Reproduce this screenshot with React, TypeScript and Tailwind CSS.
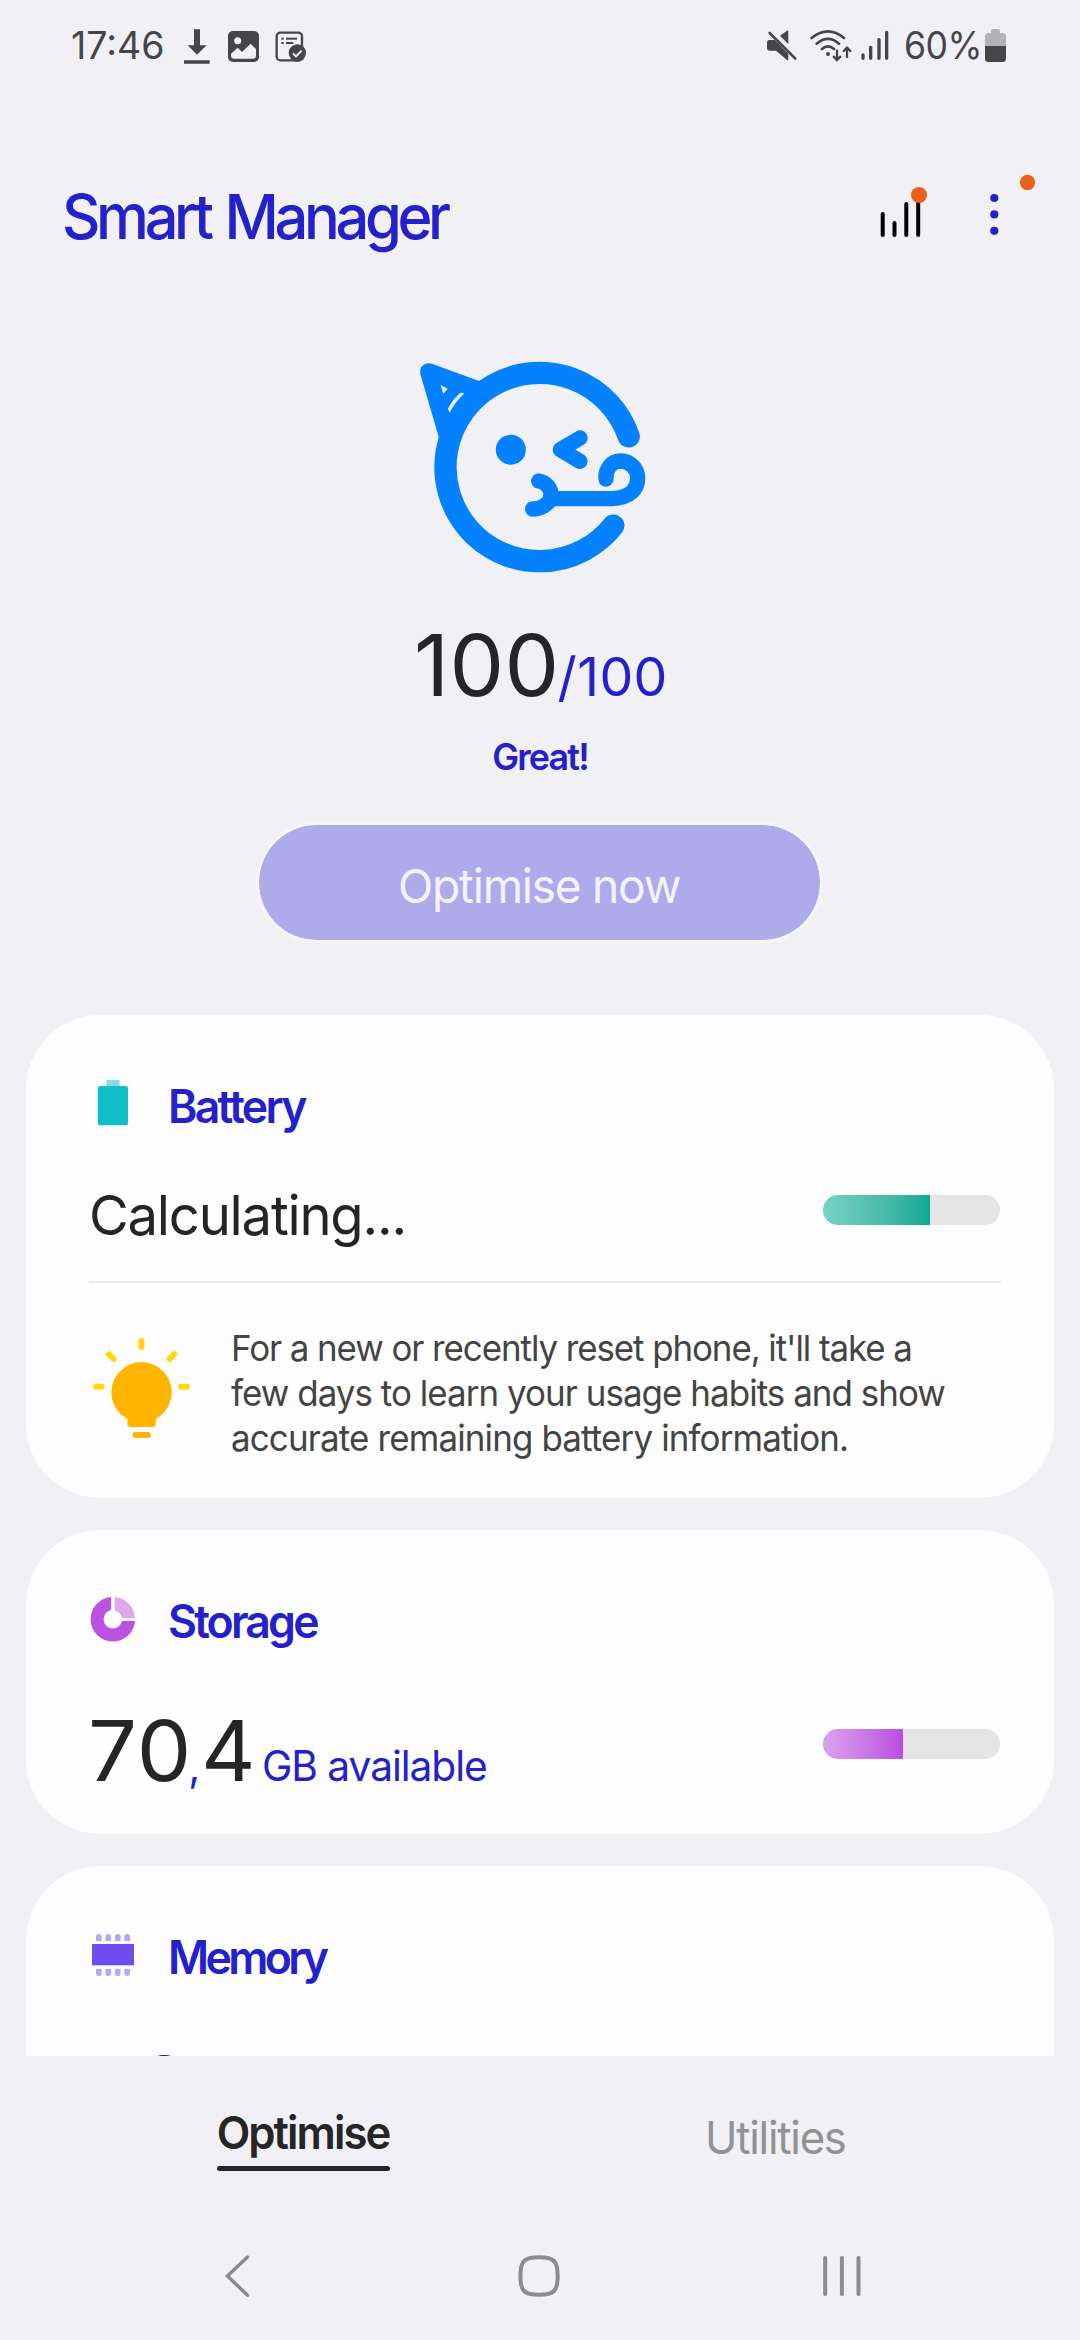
import type { ReactNode } from "react";

const INK = "#464648";

function StatusBar() {
  return (
    <div className="flex h-[91px] items-center text-[37.5px] leading-none text-[#464648]">
      <span className="ml-[71px] w-[99px]">17:46</span>
      <svg className="ml-[10px] h-[40px] w-[146px]" viewBox="390 45 438 120">
        <g fill={INK}>
          <path d="M432 55h18v48h20l-29 28-28-28h19zM402 148h77v10h-77z" />
          <rect x="534" y="60" width="93" height="93" rx="15" />
          <rect x="694" y="80" width="7" height="6" />
          <rect x="694" y="93" width="7" height="6" />
          <rect x="708" y="80" width="33" height="6" />
          <rect x="708" y="93" width="22" height="6" />
        </g>
        <circle cx="563" cy="89" r="10.500" fill="#f0f0f5" />
        <path d="M543 128l20-18 13 13 26-25 16 16v20q0 9-9 9h-57q-9 0-9-9z" fill="#f0f0f5" />
        <rect x="680" y="65" width="76" height="83" rx="11" fill="none" stroke={INK} strokeWidth="7" />
        <circle cx="742" cy="126" r="26" fill={INK} />
        <path d="M729 127l9 9 17-17" fill="none" stroke="#f0f0f5" strokeWidth="6" />
      </svg>
      <svg className="ml-[439px] h-[40px] w-[130px]" viewBox="75 45 390 120">
        <g fill={INK}>
          <path d="M145 61v40l-26-26 22-16q4-2 4 2z" />
          <path d="M81 95q0-8 8-8h15l41 42v16q0 4-4 2l-33-28H89q-8 0-8-8z" />
          <circle cx="264" cy="129" r="6" />
        </g>
        <path d="M97 57l78 76" stroke="#f0f0f5" strokeWidth="7" />
        <g fill="none" stroke={INK} strokeLinecap="round">
          <path d="M89 66l77 77" strokeWidth="8" />
          <path d="M215 81Q264 41 312 81M230 98Q264 69 297 98M246 114Q264 98 282 114" strokeWidth="8" />
          <path d="M291 119v26M281 137l10 10 10-10M321 138v-27M311 120l10-10 10 10" strokeWidth="7" />
          <path d="M369 132v10M392 109v33M417 86v56M440 64v78" strokeWidth="10" />
        </g>
      </svg>
      <span className="ml-[9px] w-[76px] origin-left scale-x-95 tracking-[-0.5px]">60%</span>
      <svg className="ml-[5px] h-[34px] w-[21px]" viewBox="0 0 21 34">
        <path d="M6 2q0-2 2-2h5q2 0 2 2v2h3q3 0 3 3v10H0V7q0-3 3-3h3z" fill="#b3b3b5" />
        <path d="M0 17h21v12q0 4-3 4H3q-3 0-3-4z" fill={INK} />
      </svg>
    </div>
  );
}

function Header() {
  return (
    <header className="flex h-[249px] items-center pt-[3px]">
      <h1 className="mt-[2px] ml-[62px] w-[461px] origin-left scale-x-[.97] text-[61.4px] font-medium leading-none tracking-[-4.5px] whitespace-nowrap [word-spacing:3.5px] text-[#2420cc]">
        Smart Manager
      </h1>
      <svg className="ml-[347px] h-[80px] w-[60px]" viewBox="870 177 60 80">
        <path d="M882.700 214v21M894.500 223v12M906.300 204v31M918.200 200v35" stroke="#000" strokeWidth="4" strokeLinecap="round" />
        <circle cx="919" cy="195" r="8" fill="#ed601a" />
      </svg>
      <svg className="ml-[50px] h-[80px] w-[60px] overflow-visible" viewBox="980 177 60 80">
        <g fill="#2420cc">
          <circle cx="994.300" cy="198" r="4.100" />
          <circle cx="994.300" cy="214.400" r="4.100" />
          <circle cx="994.300" cy="230.800" r="4.100" />
        </g>
        <circle cx="1027.500" cy="182.500" r="7.700" fill="#ed601a" />
      </svg>
    </header>
  );
}

function PartyFace() {
  return (
    <svg className="ml-[400px] h-[250px] w-[270px]" viewBox="0 0 810 750">
      <path d="M61 102Q57 76 82 70Q90 69 98 72L237 123L220 181L160 270L116 290Z" fill="#0381fe" />
      <g fill="none" stroke="#0381fe" strokeLinecap="round" strokeLinejoin="round">
        <path d="M686 289A282.500 282.500 0 1 0 640 557" strokeWidth="67" />
        <path d="M540 294L481 329L540 364" strokeWidth="46" />
        <path d="M416 423C440 426 453 447 453 464C453 486 430 507 398 507" strokeWidth="46" />
        <path d="M456 476H635C690 474 713 448 713 414C713 386 690 363 662 363C636 363 615 386 618 417" strokeWidth="46" />
      </g>
      <circle cx="332.500" cy="329" r="45" fill="#0381fe" />
      <path d="M122 136L143 146L130 161ZM144 207Q146 218 150 216Q165 186 192 161Q187 156 180 160Q155 182 144 207Z" fill="#f0f0f5" />
    </svg>
  );
}

function Summary() {
  return (
    <section className="flex flex-col">
      <PartyFace />
      <div className="mt-[33px] ml-[414px] flex h-[85px] items-baseline text-[85px] leading-[85px] text-[#252525]">
        <span className="origin-left scale-x-[1.02] tracking-[0.25px]">100</span>
        <span className="ml-[1px] text-[53.6px] tracking-[0.36px] text-[#2420cc]">/100</span>
      </div>
      <p className="mt-[29px] origin-center scale-x-[.97] text-center text-[37px] font-semibold leading-[40px] tracking-[-1.9px] text-[#2420cc]">
        Great!
      </p>
      <button className="mt-[45px] ml-[256px] flex h-[121px] w-[567px] items-center justify-center rounded-full border-3 border-[#f5f5fa] bg-[#adabea] bg-clip-padding pt-[6px] text-[47px] leading-none text-[#f4f2fb]">
        <span className="scale-x-98 tracking-[-1.25px]">Optimise now</span>
      </button>
    </section>
  );
}

type CardProps = { icon: ReactNode; title: string; titleClass: string; className: string; children: ReactNode };

function Card({ icon, title, titleClass, className, children }: CardProps) {
  return (
    <section className={`mx-[26px] overflow-hidden bg-[#fdfdfd] pt-[61px] pr-[53px] pl-[63px] ${className}`}>
      <div className="flex h-[60px] items-center">
        {icon}
        <h2 className={`ml-[31px] origin-left scale-x-[.97] text-[46px] font-semibold leading-none text-[#2420cc] ${titleClass}`}>{title}</h2>
      </div>
      {children}
    </section>
  );
}

function Meter({ fill, className }: { fill: string; className: string }) {
  return (
    <div className={`w-[177px] overflow-hidden rounded-full bg-[#e4e4e4] ${className}`}>
      <div className={`h-full bg-linear-to-r ${fill}`} />
    </div>
  );
}

function BatteryCard() {
  return (
    <Card
      title="Battery"
      titleClass="tracking-[-2.8px]"
      className="mt-[72px] h-[483px] rounded-[74px]"
      icon={
        <svg className="h-[60px] w-[48px]" viewBox="89 1076 48 60">
          <rect x="106.400" y="1080" width="13.200" height="7" fill="#88dbe0" />
          <rect x="97.800" y="1086" width="30.300" height="39.300" rx="2.500" fill="#11bec6" />
        </svg>
      }
    >
      <div className="flex h-[145px] items-start justify-between">
        <span className="mt-[49px] origin-left scale-x-98 text-[55.5px] leading-[60px] tracking-[-1.24px] text-[#252525]">Calculating...</span>
        <Meter className="mt-[59px] mr-px h-[30px]" fill="w-[106.5px] from-[#78d2c6] to-[#04a994]" />
      </div>
      <div className="h-[2px] bg-[#e8e8e8]" />
      <div className="flex">
        <svg className="mt-[47px] h-[115px] w-[106px]" viewBox="89 1330 106 115">
          <g fill="#ffb400">
            <path d="M127.400 1419A30.200 30.200 0 1 1 155.700 1419V1424q0 3-3 3h-22.300q-3 0-3-3z" />
            <rect x="132.600" y="1432" width="18.300" height="6" rx="3" />
          </g>
          <path d="M141.300 1341v6M96 1386.800h5.500M181 1386.800h6M109 1354.200l4.500 4.800M174.200 1354.200l-4.500 4.800" stroke="#ffd60f" strokeWidth="6" strokeLinecap="round" />
        </svg>
        <div className="mt-[43px] ml-[36px] flex flex-col whitespace-nowrap text-[36px] leading-[45px] text-[#444]">
          <span className="origin-left scale-x-97 tracking-[-1.12px]">For a new or recently reset phone, it'll take a</span>
          <span className="origin-left scale-x-97 tracking-[-0.98px]">few days to learn your usage habits and show</span>
          <span className="origin-left scale-x-97 tracking-[-0.88px]">accurate remaining battery information.</span>
        </div>
      </div>
    </Card>
  );
}

type AmountProps = { whole: string; wholeClass: string; fraction: string; unit: string };

function Amount({ whole, wholeClass, fraction, unit }: AmountProps) {
  return (
    <div className="mt-[58px] ml-[-1px] flex h-[84px] items-baseline whitespace-nowrap text-[84px] leading-[84px] text-[#252525]">
      <span className={wholeClass}>{whole}</span>
      <span className="ml-[-1px] w-[13px] text-[42px] text-[#2420cc]">,</span>
      <span>{fraction}</span>
      <span className="ml-[7px] origin-left scale-x-97 text-[42px] tracking-[-1.1px] text-[#2420cc]">{unit}</span>
    </div>
  );
}

function StorageCard() {
  return (
    <Card
      title="Storage"
      titleClass="tracking-[-2.95px]"
      className="mt-[32px] h-[304px] rounded-[74px]"
      icon={
        <svg className="h-[60px] w-[48px]" viewBox="89 1591 48 60">
          <path d="M111 1597A22.300 22.300 0 1 0 135.100 1621H122A9.300 9.300 0 1 1 111 1610Z" fill="#b953e0" />
          <path d="M114.700 1597A22.300 22.300 0 0 1 135 1618H122Q120.500 1612 114.700 1610.500Z" fill="#dca8ec" />
        </svg>
      }
    >
      <div className="flex items-start justify-between">
        <Amount whole="70" wholeClass="origin-left scale-x-[1.03] tracking-[1px]" fraction="4" unit="GB available" />
        <Meter className="mt-[78px] mr-px h-[30px]" fill="w-[79.5px] from-[#dca2f0] to-[#b84de0]" />
      </div>
    </Card>
  );
}

function MemoryCard() {
  return (
    <Card
      title="Memory"
      titleClass="tracking-[-3.8px]"
      className="mt-[32px] h-[190px] rounded-t-[74px]"
      icon={
        <svg className="h-[60px] w-[48px]" viewBox="89 1927 48 60">
          <rect x="92" y="1944" width="42" height="21.300" fill="#714cf0" />
          <path
            d="M96 1941v-4q0-3 2.850-3t2.850 3v4zM105.400 1941v-4q0-3 2.850-3t2.850 3v4zM114.900 1941v-4q0-3 2.850-3t2.850 3v4zM124.300 1941v-4q0-3 2.850-3t2.850 3v4zM96 1969v4q0 3 2.850 3t2.850-3v-4zM105.400 1969v4q0 3 2.850 3t2.850-3v-4zM114.900 1969v4q0 3 2.850 3t2.850-3v-4zM124.300 1969v4q0 3 2.850 3t2.850-3v-4z"
            fill="#b6a7f0"
          />
        </svg>
      }
    >
      <Amount whole="1" wholeClass="ml-[2px] mr-[2px]" fraction="8" unit="GB available" />
    </Card>
  );
}

function Tabs() {
  return (
    <nav className="flex h-[164px] items-start text-[45px] leading-[54px]">
      <div className="mt-[50px] ml-[217px] flex w-[173px] flex-col items-center">
        <span className="mr-[2px] scale-x-97 font-semibold tracking-[-2px] text-[#252525]">Optimise</span>
        <span className="mt-[6px] h-[5px] w-full rounded-full bg-[#252525]" />
      </div>
      <span className="mt-[54.5px] ml-[315px] origin-left scale-x-97 tracking-[-1.28px] text-[#929292]">Utilities</span>
    </nav>
  );
}

function SystemNav() {
  return (
    <div className="flex h-[120px] items-start pt-[26px] pl-[207px]">
      <svg className="h-[60px] w-[60px]" viewBox="207 2246 60 60" fill="none" stroke="#8c8c8e" strokeWidth="3.5" strokeLinecap="round">
        <path d="M247.500 2257L227.500 2276L247.500 2295.200" />
      </svg>
      <svg className="ml-[242px] h-[60px] w-[60px]" viewBox="509 2246 60 60" fill="none" stroke="#8c8c8e" strokeWidth="4">
        <path d="M539 2257.200C554 2257.200 557.700 2261 557.700 2276S554 2294.800 539 2294.800S520.400 2291 520.400 2276S524 2257.200 539 2257.200Z" />
      </svg>
      <svg className="ml-[243px] h-[60px] w-[60px]" viewBox="812 2246 60 60" stroke="#8c8c8e" strokeWidth="4" strokeLinecap="round">
        <path d="M825.200 2258v36M841.900 2258v36M858.500 2258v36" />
      </svg>
    </div>
  );
}

export default function App() {
  return (
    <div className="flex h-[2340px] w-[1080px] flex-col overflow-hidden bg-[#f0f0f5] font-['Inter',sans-serif]">
      <StatusBar />
      <Header />
      <Summary />
      <BatteryCard />
      <StorageCard />
      <MemoryCard />
      <Tabs />
      <SystemNav />
    </div>
  );
}
